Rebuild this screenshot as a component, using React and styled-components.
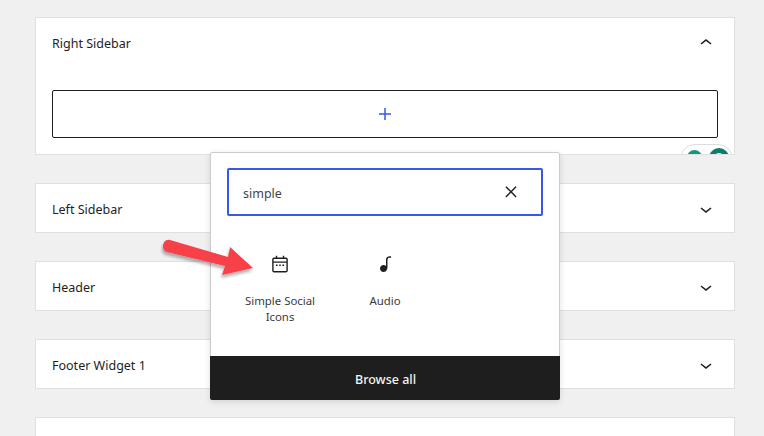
import React from "react";
import styled, { createGlobalStyle } from "styled-components";

const Global = createGlobalStyle`
  html, body { margin: 0; padding: 0; background: #f0f0f0; }
  body { font-family: "Noto Sans", "Open Sans", sans-serif; color: #1e1e1e; }
`;

const Page = styled.div`
  position: relative;
  width: 764px;
  height: 436px;
  overflow: hidden;
  box-sizing: border-box;
  padding: 17px 29px 0 35px;
  display: flex;
  flex-direction: column;
  gap: 28px;
`;

const Panel = styled.section`
  position: relative;
  flex: none;
  background: #fff;
  border: 1px solid #e0e0e0;
  overflow: hidden;
`;

const PanelHeader = styled.div`
  height: 48px;
  padding: 0 16px;
  display: flex;
  align-items: center;
  justify-content: space-between;
`;

const PanelTitle = styled.span`
  font-size: 12.5px;
  font-weight: 400;
  line-height: 18px;
  padding-top: 4px;
  color: #1e1e1e;
`;

const Chevron = styled.svg`
  width: 24px;
  height: 24px;
  fill: #1e1e1e;
  transform: translateY(1px);
`;

const PanelBody = styled.div`
  padding: 24px 16px 16px;
`;

const Appender = styled.div`
  height: 46px;
  border: 1px solid #1e1e1e;
  border-radius: 2px;
  display: flex;
  align-items: center;
  justify-content: center;
`;

const Plus = styled.svg`
  width: 24px;
  height: 24px;
  fill: #3858e9;
`;

const Avatars = styled.div`
  position: absolute;
  right: 1px;
  bottom: -20px;
  width: 53px;
  height: 30px;
  border: 1px solid #dcdcde;
  border-radius: 15px;
  background: #fff;
  box-sizing: border-box;
`;

const AvatarDot = styled.span`
  position: absolute;
  border-radius: 50%;
  box-sizing: border-box;
  left: ${(p) => p.$left}px;
  top: ${(p) => p.$top}px;
  width: ${(p) => p.$size}px;
  height: ${(p) => p.$size}px;
  background: ${(p) => p.$fill};
  border: ${(p) => (p.$ring ? `5px solid ${p.$ring}` : "none")};
`;

const Popover = styled.div`
  position: absolute;
  left: 210px;
  top: 152px;
  width: 350px;
  height: 248px;
  box-sizing: border-box;
  background: #fff;
  border: 1px solid #ccc;
  border-radius: 2px;
  box-shadow: 0 2px 6px rgba(0, 0, 0, 0.12);
  display: flex;
  flex-direction: column;
  padding-top: 15px;
`;

const SearchBox = styled.div`
  flex: none;
  margin: 0 16px;
  height: 48px;
  box-sizing: border-box;
  border: 2px solid #3858e9;
  border-radius: 2px;
  display: flex;
  align-items: center;
  justify-content: space-between;
  padding: 0 18px 0 14px;
`;

const SearchText = styled.span`
  font-size: 12.5px;
  line-height: 18px;
  padding-top: 4px;
  color: #444;
`;

const CloseIcon = styled.svg`
  width: 24px;
  height: 24px;
  fill: #1e1e1e;
`;

const Results = styled.div`
  flex: 1;
  display: flex;
  padding: 36px 16px 0 16px;
`;

const BlockItem = styled.div`
  width: 105px;
  display: flex;
  flex-direction: column;
  align-items: center;
`;

const BlockIcon = styled.svg`
  width: 24px;
  height: 24px;
  fill: #1e1e1e;
`;

const BlockLabel = styled.span`
  margin-top: 17px;
  padding-left: 1px;
  font-size: 11.4px;
  line-height: 16px;
  width: 84px;
  text-align: center;
  color: #3a3a3a;
`;

const BrowseAll = styled.div`
  flex: none;
  margin: 0 -1px -1px;
  height: 44px;
  padding: 2px 0 0 1px;
  box-sizing: border-box;
  background: #1e1e1e;
  border-radius: 0 0 2px 2px;
  color: #f4f4f4;
  font-size: 12.5px;
  font-weight: 500;
  display: flex;
  align-items: center;
  justify-content: center;
`;

const ArrowOverlay = styled.svg`
  position: absolute;
  left: 155px;
  top: 232px;
  width: 135px;
  height: 55px;
  overflow: visible;
`;

const up = "M6.5 12.4L12 8l5.5 4.4-.9 1.2L12 10l-4.5 3.6-1-1.2z";
const down = "M17.5 11.6L12 16l-5.5-4.4.9-1.2L12 14l4.5-3.6 1 1.2z";

function ToggleIcon({ open }) {
  return (
    <Chevron viewBox="0 0 24 24">
      <path d={open ? up : down} />
    </Chevron>
  );
}

function ClosedPanel({ title }) {
  return (
    <Panel>
      <PanelHeader>
        <PanelTitle>{title}</PanelTitle>
        <ToggleIcon />
      </PanelHeader>
    </Panel>
  );
}

export default function App() {
  return (
    <Page>
      <Global />
      <Panel>
        <PanelHeader>
          <PanelTitle>Right Sidebar</PanelTitle>
          <ToggleIcon open />
        </PanelHeader>
        <PanelBody>
          <Appender>
            <Plus viewBox="0 0 24 24">
              <path d="M18 11.25h-5.25V6h-1.5v5.25H6v1.5h5.25V18h1.5v-5.25H18z" />
            </Plus>
          </Appender>
        </PanelBody>
        <Avatars>
          <AvatarDot $left={6} $top={5} $size={15} $fill="#0a9b82" />
          <AvatarDot $left={28} $top={3} $size={20} $fill="#fff" $ring="#0a7d6e" />
        </Avatars>
      </Panel>
      <ClosedPanel title="Left Sidebar" />
      <ClosedPanel title="Header" />
      <ClosedPanel title="Footer Widget 1" />
      <ClosedPanel title="" />

      <Popover>
        <SearchBox>
          <SearchText>simple</SearchText>
          <CloseIcon viewBox="0 0 24 24">
            <path d="M13 11.8l4.6-4.6-1-1-4.6 4.600-4.600-4.600-1 1 4.600 4.600-4.600 4.600 1 1 4.600-4.600 4.600 4.600 1-1z" />
          </CloseIcon>
        </SearchBox>
        <Results>
          <BlockItem>
            <BlockIcon viewBox="0 0 24 24">
              <path d="M6.2 5.500h1.600V3.800h1.400v1.700h5.600V3.800h1.400v1.700h1.600c1.100 0 2 .9 2 2v11c0 1.100-.9 2-2 2H6.200c-1.100 0-2-.9-2-2v-11c0-1.100.9-2 2-2zm0 1.400c-.3 0-.6.3-.6.6v1.900h12.800V7.500c0-.3-.3-.6-.6-.6H6.200zm-.6 3.900v7.700c0 .3.3.6.6.6h11.600c.3 0 .6-.3.6-.6v-7.700H5.600z" />
              <path d="M8 12.500h1.600v1.600H8zM11.200 12.500h1.600v1.600h-1.600zM14.400 12.500H16v1.600h-1.600z" />
            </BlockIcon>
            <BlockLabel>Simple Social Icons</BlockLabel>
          </BlockItem>
          <BlockItem>
            <BlockIcon viewBox="0 0 24 24">
              <path d="M17.700 4.300c-1.200 0-2.800 0-3.800 1-.6.6-.9 1.500-.9 2.600V14c-.6-.6-1.500-1-2.500-1C8.600 13 7 14.600 7 16.500S8.600 20 10.500 20c1.500 0 2.800-1 3.300-2.300.5-.8.7-1.600.7-2.500V7.900c0-.7.2-1.200.5-1.600.6-.6 1.800-.6 2.800-.6h.3V4.300h-.4z" />
            </BlockIcon>
            <BlockLabel>Audio</BlockLabel>
          </BlockItem>
        </Results>
        <BrowseAll>Browse all</BrowseAll>
      </Popover>

      <ArrowOverlay viewBox="0 0 135 55">
        <defs>
          <filter id="arrowShadow" x="-10%" y="-20%" width="125%" height="150%">
            <feDropShadow dx="-1" dy="3" stdDeviation="1.5" floodColor="#000" floodOpacity="0.3" />
          </filter>
        </defs>
        <path
          d="M15 8L73 25l2-10 23 21-31 7 3-9L12 20C5 18 8 6 15 8z"
          fill="#f8404a"
          filter="url(#arrowShadow)"
        />
      </ArrowOverlay>
    </Page>
  );
}
